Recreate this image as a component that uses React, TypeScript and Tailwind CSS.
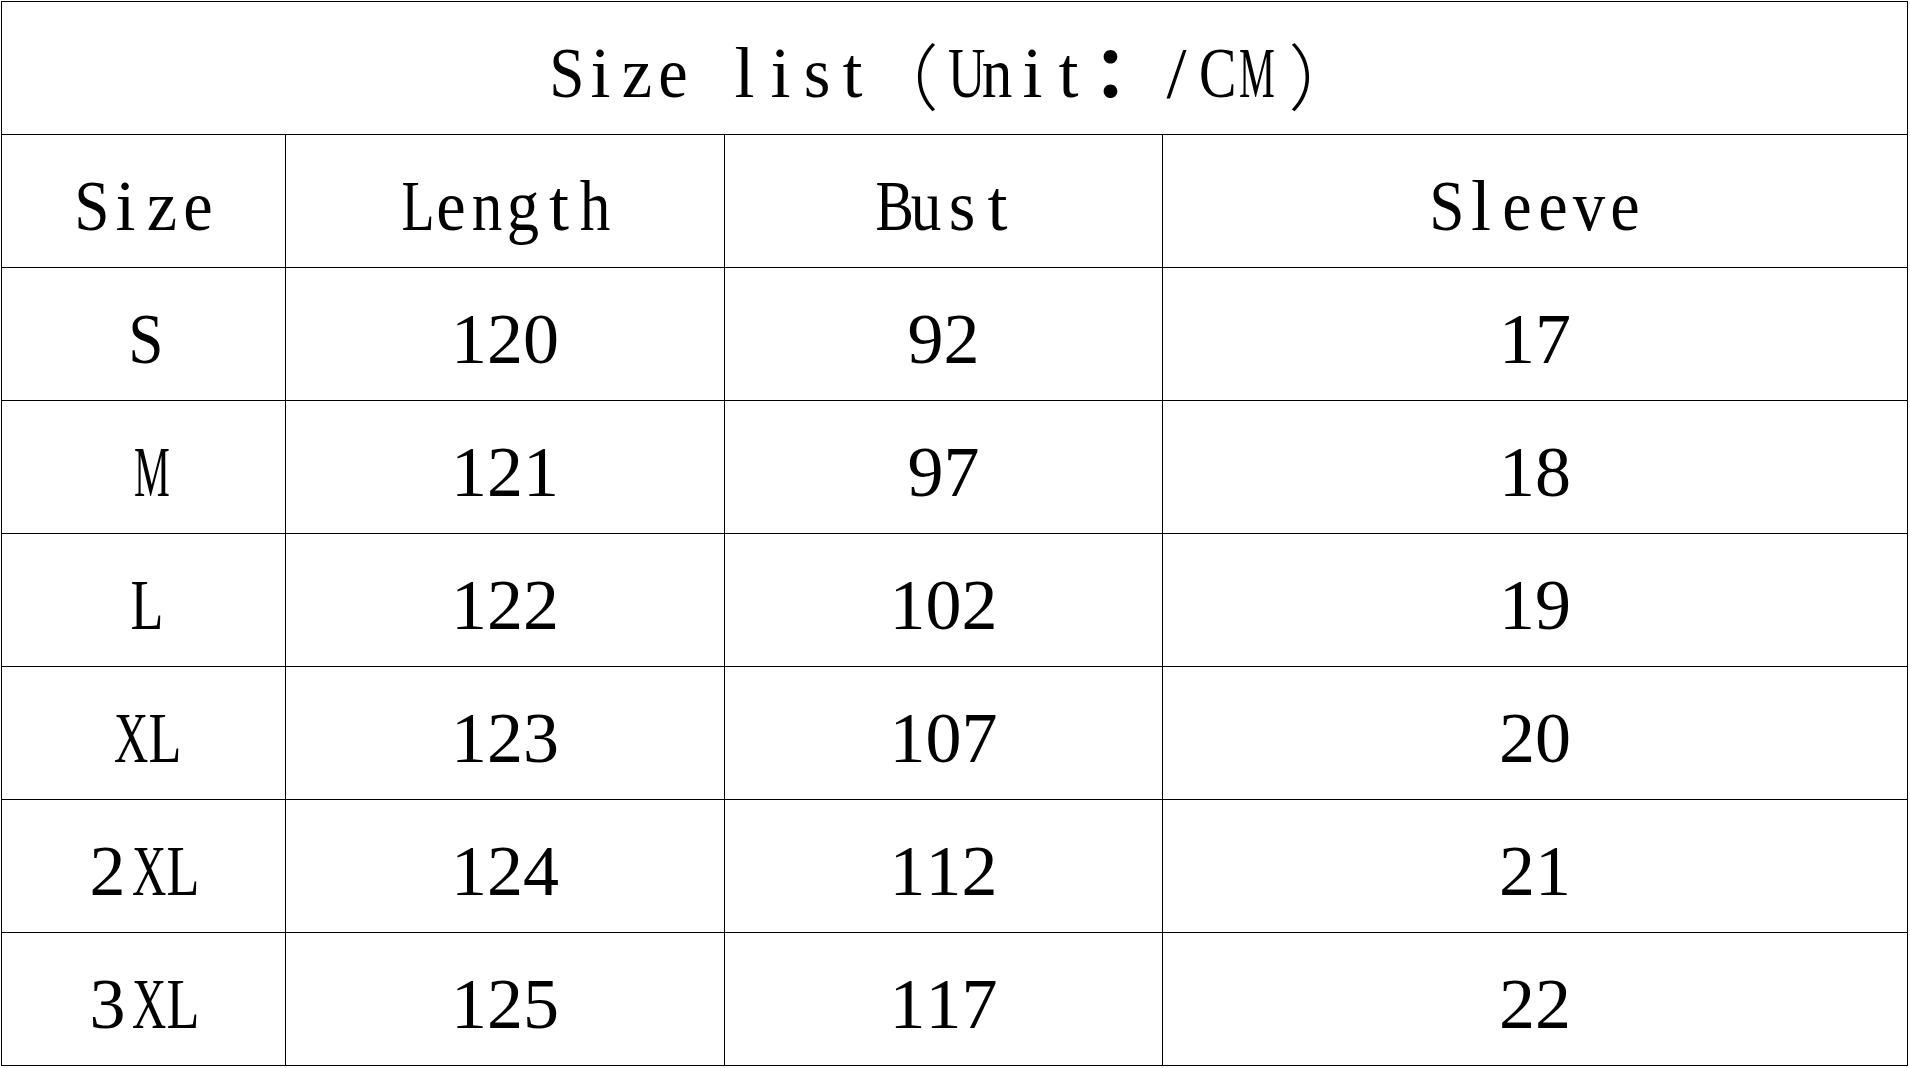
import React from "react";

const scaleMap: Record<string, string> = {
  S: "scale-x-[0.88]",
  L: "scale-x-[0.75]",
  B: "scale-x-[0.8]",
  M: "scale-x-[0.56]",
  X: "scale-x-[0.66]",
  U: "scale-x-[0.72]",
  C: "scale-x-[0.78]",
  e: "scale-x-[0.92]",
  n: "scale-x-[0.85]",
  g: "scale-x-[0.9]",
  h: "scale-x-[0.85]",
  u: "scale-x-[0.85]",
  v: "scale-x-[0.9]",
  s: "scale-x-[0.95]",
  z: "scale-x-[0.95]",
};

const wideAlign: Record<string, string> = {
  "（": "justify-end pr-[4px]",
  "）": "justify-start pl-[22px]",
  "：": "justify-start pl-[6px]",
};

const wideInner: Record<string, string> = {
  "（": "font-light",
  "）": "font-light",
  "：": "font-bold -translate-y-[7px]",
};

function Mono({ text }: { text: string }) {
  return (
    <span className="inline-flex whitespace-pre">
      {Array.from(text).map((ch, i) => {
        const wide = ch.charCodeAt(0) > 0xff;
        if (wide) {
          return (
            <span
              key={i}
              className={"w-[72px] inline-flex overflow-visible " + (wideAlign[ch] ?? "justify-center")}
            >
              <span
                style={{ fontFamily: '"Noto Sans CJK SC", sans-serif' }}
                className={"inline-block " + (wideInner[ch] ?? "")}
              >
                {ch}
              </span>
            </span>
          );
        }
        return (
          <span
            key={i}
            className={"w-[36px] inline-block text-center " + (scaleMap[ch] ?? "")}
          >
            {ch === " " ? "\u00a0" : ch}
          </span>
        );
      })}
    </span>
  );
}

const rows = [
  ["S", "120", "92", "17"],
  ["M", "121", "97", "18"],
  ["L", "122", "102", "19"],
  ["XL", "123", "107", "20"],
  ["2XL", "124", "112", "21"],
  ["3XL", "125", "117", "22"],
];

function Cell({ text }: { text: string }) {
  return (
    <div className="h-[133px] border-r border-b border-black flex items-center justify-center pt-[10px]">
      <Mono text={text} />
    </div>
  );
}

export default function App() {
  return (
    <div
      className="w-[1910px] h-[1068px] bg-white text-black text-[72px] leading-none pl-[1px] pt-[1px]"
      style={{ fontFamily: '"Liberation Serif", "Noto Sans CJK SC", serif' }}
    >
      <div className="w-[1907px] border-l border-t border-black grid grid-cols-[284px_439px_438px_745px]">
        <div className="col-span-4 h-[133px] border-r border-b border-black flex items-center justify-center pt-[10px] pr-[24px]">
          <Mono text="Size list（Unit：/CM）" />
        </div>
        <Cell text="Size" />
        <Cell text="Length" />
        <Cell text="Bust" />
        <Cell text="Sleeve" />
        {rows.map((r, i) => (
          <React.Fragment key={i}>
            {r.map((c, j) => (
              <Cell key={j} text={c} />
            ))}
          </React.Fragment>
        ))}
      </div>
    </div>
  );
}
